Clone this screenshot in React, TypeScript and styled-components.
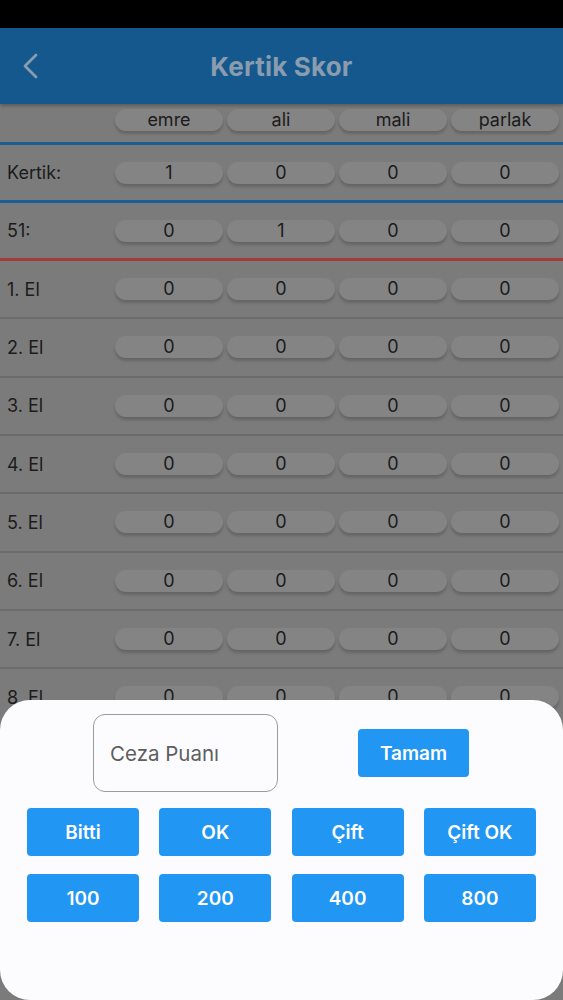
import React from "react";
import styled, { createGlobalStyle } from "styled-components";

const Global = createGlobalStyle`
  html, body { margin: 0; padding: 0; background: #000; }
  body { font-family: Inter, "Noto Sans", "Liberation Sans", sans-serif; }
  #root { width: 563px; height: 1000px; overflow: hidden; position: relative; }
`;

const Screen = styled.div`
  width: 563px;
  height: 1000px;
  display: flex;
  flex-direction: column;
  background: #7b7b7b;
  position: relative;
  overflow: hidden;
`;

const StatusBar = styled.div`
  height: 28px;
  background: #000;
  flex: none;
`;

const AppBar = styled.div`
  height: 76px;
  background: #14588e;
  display: flex;
  align-items: center;
  justify-content: center;
  position: relative;
  flex: none;
  box-shadow: 0 2px 3px rgba(0, 0, 0, 0.25);
`;

const BackButton = styled.div`
  position: absolute;
  left: 18px;
  top: 24px;
  width: 24px;
  height: 28px;
  display: flex;
  align-items: center;
  justify-content: center;
`;

const Title = styled.div`
  font-size: 26px;
  font-weight: 700;
  color: #8a9cad;
  letter-spacing: 0.2px;
`;

const Table = styled.div`
  display: flex;
  flex-direction: column;
`;

const Row = styled.div<{ $h: number; $line?: string; $lineW?: number; $padBottom?: number }>`
  height: ${(p) => p.$h}px;
  display: grid;
  grid-template-columns: 113px repeat(4, 112px);
  align-items: center;
  box-sizing: border-box;
  padding-bottom: ${(p) => p.$padBottom ?? 0}px;
  border-bottom: ${(p) => (p.$line ? `${p.$lineW ?? 2}px solid ${p.$line}` : "none")};
  flex: none;
`;

const Label = styled.div`
  padding-left: 7px;
  font-size: 18px;
  color: #1b1b1b;
`;

const Pill = styled.div`
  margin: 0 2px;
  height: 22px;
  border-radius: 11px;
  background: #848484;
  box-shadow: 0 3px 3px rgba(0, 0, 0, 0.18);
  display: flex;
  align-items: center;
  justify-content: center;
  font-size: 18px;
  color: #1b1b1b;
  line-height: 1;
`;

const Sheet = styled.div`
  position: absolute;
  left: 0;
  right: 0;
  top: 700px;
  bottom: 0;
  background: #fcfcfe;
  border-radius: 30px;
  display: flex;
  flex-direction: column;
  padding-top: 14px;
  box-sizing: border-box;
`;

const InputRow = styled.div`
  display: flex;
  align-items: center;
  justify-content: space-between;
  padding: 0 94px 0 93px;
`;

const Field = styled.div`
  width: 185px;
  height: 78px;
  box-sizing: border-box;
  border: 1px solid #9b9b9b;
  border-radius: 12px;
  display: flex;
  align-items: center;
  padding-left: 16px;
  font-size: 20.5px;
  color: #5e5e5e;
`;

const Button = styled.div<{ $w?: number }>`
  height: 48px;
  width: ${(p) => (p.$w ? `${p.$w}px` : "auto")};
  background: #2196f3;
  border-radius: 4px;
  display: flex;
  align-items: center;
  justify-content: center;
  color: #fff;
  font-size: 19px;
  font-weight: 600;
`;

const ButtonGrid = styled.div`
  margin-top: 16px;
  display: grid;
  grid-template-columns: repeat(4, 112px);
  column-gap: 20.3px;
  row-gap: 18px;
  padding-left: 27px;
`;

const players = ["emre", "ali", "mali", "parlak"];
const kertik = [1, 0, 0, 0];
const elli = [0, 1, 0, 0];

export default function App() {
  const hands = [1, 2, 3, 4, 5, 6, 7, 8];
  return (
    <>
      <Global />
      <Screen>
        <StatusBar />
        <AppBar>
          <BackButton>
            <svg width="18" height="28" viewBox="0 0 18 28">
              <path d="M15 3 L4 14 L15 25" fill="none" stroke="#8a9cad" strokeWidth="2.8" strokeLinecap="round" strokeLinejoin="round" />
            </svg>
          </BackButton>
          <Title>Kertik Skor</Title>
        </AppBar>
        <Table>
          <Row $h={41} $line="#1b5e94" $lineW={3} $padBottom={6}>
            <Label />
            {players.map((p) => (
              <Pill key={p}>{p}</Pill>
            ))}
          </Row>
          <Row $h={58} $line="#1b5e94" $lineW={3}>
            <Label>Kertik:</Label>
            {kertik.map((v, i) => (
              <Pill key={i}>{v}</Pill>
            ))}
          </Row>
          <Row $h={58} $line="#a23a3a" $lineW={3}>
            <Label>51:</Label>
            {elli.map((v, i) => (
              <Pill key={i}>{v}</Pill>
            ))}
          </Row>
          {hands.map((h) => (
            <Row key={h} $h={58.33} $line="#6c6c6c" $lineW={2}>
              <Label>{h}. El</Label>
              {players.map((p) => (
                <Pill key={p}>0</Pill>
              ))}
            </Row>
          ))}
        </Table>
        <Sheet>
          <InputRow>
            <Field>Ceza Puanı</Field>
            <Button $w={111}>Tamam</Button>
          </InputRow>
          <ButtonGrid>
            {["Bitti", "OK", "Çift", "Çift OK", "100", "200", "400", "800"].map((b) => (
              <Button key={b}>{b}</Button>
            ))}
          </ButtonGrid>
        </Sheet>
      </Screen>
    </>
  );
}
